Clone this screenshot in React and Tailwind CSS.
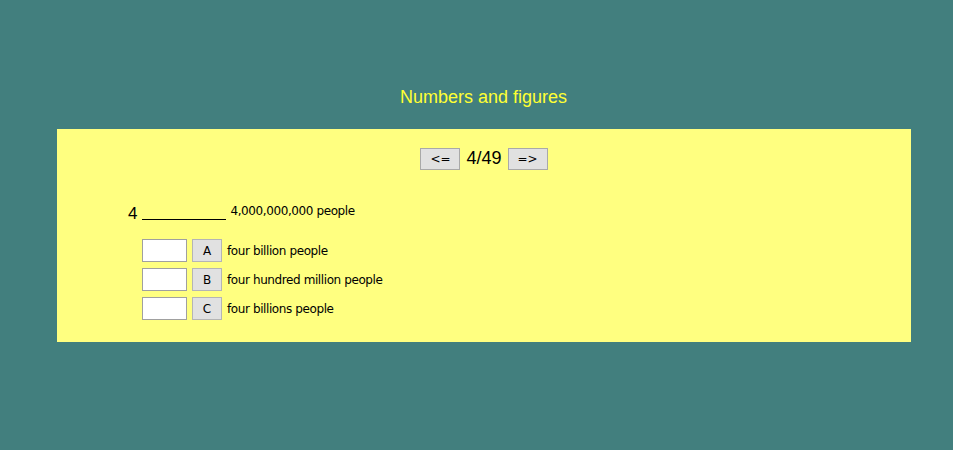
import React from "react";

const options = [
  { key: "A", label: "four billion people" },
  { key: "B", label: "four hundred million people" },
  { key: "C", label: "four billions people" },
];

export default function App() {
  return (
    <div className="min-h-screen bg-[#427f7e] pt-[86px] font-['Liberation_Sans',Arial,sans-serif]">
      {/* Title */}
      <h1 className="text-center text-[18px] leading-[22px] text-[#ffff33] pl-[14px]">
        Numbers and figures
      </h1>

      {/* Quiz panel */}
      <div className="ml-[57px] w-[854px] mt-[21px] h-[213px] bg-[#ffff80] pt-[16px]">
        <div className="flex items-center justify-center gap-[6px]">
          <button className="h-[22px] w-[40px] border border-[#a9a9a9] bg-[#e1e1e1] text-[12px] font-['DejaVu_Sans',sans-serif] text-black">
            &lt;=
          </button>
          <span className="text-[18px] text-black">4/49</span>
          <button className="h-[22px] w-[40px] border border-[#a9a9a9] bg-[#e1e1e1] text-[12px] font-['DejaVu_Sans',sans-serif] text-black">
            =&gt;
          </button>
        </div>

        <div className="mt-[30px] ml-[71px] flex items-end text-black">
          <span className="text-[17px] leading-[20px]">4</span>
          <span className="ml-[5px] mb-[4px] w-[84px] border-b border-black"></span>
          <span className="ml-[4px] mb-[4px] text-[12px] font-['DejaVu_Sans',sans-serif] tracking-[-0.4px]">
            4,000,000,000 people
          </span>
        </div>

        <div className="mt-[15px] ml-[85px] flex flex-col gap-[6px]">
          {options.map((o) => (
            <div key={o.key} className="flex items-center">
              <input
                type="text"
                className="h-[23px] w-[45px] border border-[#a0a0a0] bg-white"
              />
              <button className="ml-[5px] h-[23px] w-[30px] border border-[#b5b5b5] bg-[#e1e1e1] text-[12px] font-['DejaVu_Sans',sans-serif] text-black">
                {o.key}
              </button>
              <span className="ml-[5px] text-[12px] font-['DejaVu_Sans',sans-serif] tracking-[-0.4px] text-black">
                {o.label}
              </span>
            </div>
          ))}
        </div>
      </div>
    </div>
  );
}
